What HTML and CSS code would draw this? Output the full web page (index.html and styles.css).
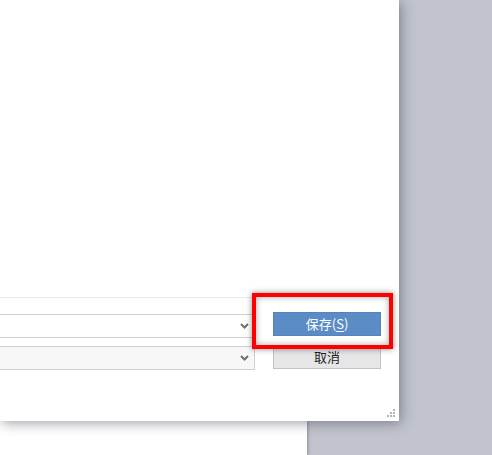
FILE: index.html
```html
<!DOCTYPE html>
<html>
<head>
<meta charset="utf-8">
<link rel="stylesheet" href="styles.css">
</head>
<body>
<div class="desk">
  <div class="dialog">
    <div class="form">
      <div class="fields">
        <div class="select">
          <svg class="chev" width="9" height="6" viewBox="0 0 9 6"><path d="M1 1 L4.5 4.5 L8 1" fill="none" stroke="#6f6f72" stroke-width="2"/></svg>
        </div>
        <div class="select alt">
          <svg class="chev" width="9" height="6" viewBox="0 0 9 6"><path d="M1 1 L4.5 4.5 L8 1" fill="none" stroke="#6f6f72" stroke-width="2"/></svg>
        </div>
      </div>
      <div class="buttons">
        <div class="btn primary">保存(<u>S</u>)</div>
        <div class="btn">取消</div>
      </div>
    </div>
    <div class="highlight"></div>
    <svg class="grip" width="10" height="10" viewBox="0 0 10 10">
      <rect x="7" y="1" width="2" height="2" fill="#b5b5b5"/>
      <rect x="4" y="4" width="2" height="2" fill="#b5b5b5"/>
      <rect x="7" y="4" width="2" height="2" fill="#b5b5b5"/>
      <rect x="1" y="7" width="2" height="2" fill="#b5b5b5"/>
      <rect x="4" y="7" width="2" height="2" fill="#b5b5b5"/>
      <rect x="7" y="7" width="2" height="2" fill="#b5b5b5"/>
    </svg>
  </div>
  <div class="backwin"></div>
</div>
</body>
</html>
```
FILE: styles.css
```css
html, body {
  margin: 0;
  padding: 0;
  width: 492px;
  height: 455px;
  overflow: hidden;
  background: #c1c4cc;
  font-family: "Noto Sans CJK SC", "Noto Sans", sans-serif;
}
.desk {
  display: flex;
  flex-direction: column;
}
.dialog {
  position: relative;
  z-index: 1;
  width: 399px;
  height: 421px;
  box-sizing: border-box;
  background: #fff;
  box-shadow: 2px 2px 12px rgba(40, 45, 60, 0.45);
  display: flex;
  flex-direction: column;
  justify-content: flex-end;
  padding-bottom: 51px;
}
.backwin {
  width: 307px;
  height: 34px;
  background: #fff;
  box-shadow: 1px 0 3px rgba(40, 45, 60, 0.35);
}
.form {
  display: flex;
  align-items: flex-start;
}
.fields {
  width: 255px;
  border-top: 1px solid #e8e8e8;
  padding-top: 16px;
  display: flex;
  flex-direction: column;
  gap: 8px;
}
.select {
  height: 24px;
  box-sizing: border-box;
  border: 1px solid #cfcfcf;
  border-left: none;
  background: #fff;
  display: flex;
  align-items: center;
  justify-content: flex-end;
  padding-right: 5px;
}
.select.alt {
  background: #f7f7f7;
}
.buttons {
  margin-left: 18px;
  width: 108px;
  padding-top: 15px;
  display: flex;
  flex-direction: column;
  gap: 9px;
}
.btn {
  height: 24px;
  box-sizing: border-box;
  border: 1px solid #c3c3c3;
  background: #e6e6e6;
  color: #222;
  font-size: 13px;
  line-height: 22px;
  text-align: center;
}
.btn.primary {
  border-color: #5284c0;
  background: #5b8cc6;
  color: #fff;
}
.btn u {
  text-underline-offset: 2px;
}
.highlight {
  position: absolute;
  left: 252px;
  top: 293px;
  width: 141px;
  height: 56px;
  box-sizing: border-box;
  border: 4px solid #ff0000;
  box-shadow: 0 0 6px rgba(0, 0, 0, 0.45), inset 0 0 6px rgba(0, 0, 0, 0.35);
}
.grip {
  position: absolute;
  right: 3px;
  bottom: 3px;
}
```
